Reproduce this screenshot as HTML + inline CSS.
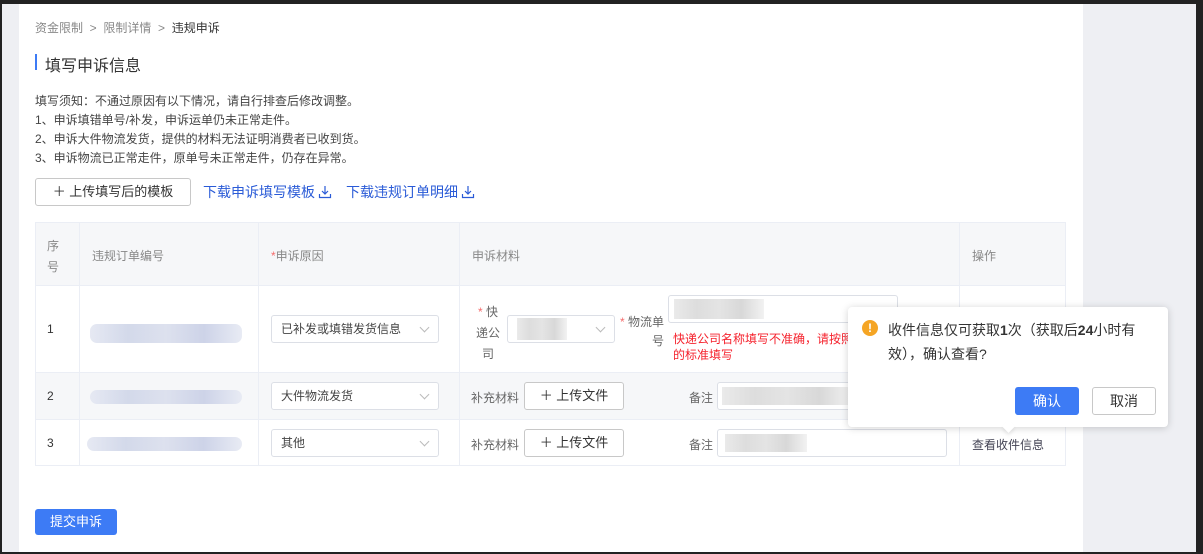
<!DOCTYPE html>
<html><head><meta charset="utf-8"><style>
*{margin:0;padding:0;box-sizing:border-box}
body{width:1203px;height:554px;background:#222;position:relative;overflow:hidden;font-family:"Liberation Sans","Noto Sans CJK SC",sans-serif;color:#333;font-size:12px}
.bg{position:absolute;left:2px;top:4px;width:1194px;height:548px;background:#eeeff3}
.card{position:absolute;left:19px;top:4px;width:1064px;height:548px;background:#fff}
.a{position:absolute;white-space:nowrap}
.gray{color:#888}
.blur{position:absolute;height:14px;border-radius:7px;background:linear-gradient(90deg,#e6e9f3,#d3d9ea,#dde1ee,#cdd3e8,#e8ebf4)}
.blurg{position:absolute;height:18px;background:linear-gradient(90deg,#eaeaea,#ddd,#e4e4e4,#d8d8d8,#f2f2f2)}
.sel{position:absolute;height:28px;border:1px solid #dcdfe6;border-radius:3px;background:#fff;font-size:12px;line-height:26px;padding-left:9px;color:#444}
.sel:after{content:"";position:absolute;right:10px;top:8px;width:6px;height:6px;border-right:1px solid #bbb;border-bottom:1px solid #bbb;transform:rotate(45deg)}
.btn{position:absolute;border:1px solid #c8c8c8;border-radius:3px;background:#fff;text-align:center;color:#333}
.inp{position:absolute;border:1px solid #dcdfe6;border-radius:3px;background:#fff}
.line{position:absolute;background:#ebeef5}
.lk{position:absolute;font-size:14px;color:#2a5bd7;white-space:nowrap}
</style></head><body>
<div class="bg"></div>
<div class="card"></div>
<div class="a gray" style="left:35px;top:19px;font-size:12px">资金限制 &nbsp;&gt;&nbsp; 限制详情 &nbsp;&gt;&nbsp; <span style="color:#333">违规申诉</span></div>
<div class="a" style="left:35px;top:54px;width:2px;height:16px;background:#3d7bf5"></div>
<div class="a" style="left:45px;top:52px;font-size:16px;color:#333">填写申诉信息</div>
<div class="a" style="left:35px;top:92px;line-height:19px;color:#444;font-size:12px">填写须知：不通过原因有以下情况，请自行排查后修改调整。<br>1、申诉填错单号/补发，申诉运单仍未正常走件。<br>2、申诉大件物流发货，提供的材料无法证明消费者已收到货。<br>3、申诉物流已正常走件，原单号未正常走件，仍存在异常。</div>
<div class="btn" style="left:35px;top:178px;width:156px;height:28px;line-height:26px;font-size:13px">＋ 上传填写后的模板</div>
<div class="lk" style="left:203px;top:182px">下载申诉填写模板</div>
<svg class="a" style="left:318px;top:185px" width="14" height="14" viewBox="0 0 14 14" fill="none" stroke="#2a5bd7" stroke-width="1.2"><path d="M7 1v8M4 6l3 3 3-3M1.5 9v3.5h11V9"/></svg>
<div class="lk" style="left:346px;top:182px">下载违规订单明细</div>
<svg class="a" style="left:461px;top:185px" width="14" height="14" viewBox="0 0 14 14" fill="none" stroke="#2a5bd7" stroke-width="1.2"><path d="M7 1v8M4 6l3 3 3-3M1.5 9v3.5h11V9"/></svg>

<div class="a" style="left:35px;top:222px;width:1031px;height:244px;border:1px solid #ebeef5"></div>
<div class="a" style="left:36px;top:223px;width:1029px;height:62px;background:#f6f7f9"></div>
<div class="a" style="left:36px;top:373px;width:1029px;height:46px;background:#f6f7f9"></div>
<div class="line" style="left:35px;top:285px;width:1031px;height:1px"></div>
<div class="line" style="left:35px;top:372px;width:1031px;height:1px"></div>
<div class="line" style="left:35px;top:419px;width:1031px;height:1px"></div>
<div class="line" style="left:79px;top:222px;width:1px;height:244px"></div>
<div class="line" style="left:258px;top:222px;width:1px;height:244px"></div>
<div class="line" style="left:459px;top:222px;width:1px;height:244px"></div>
<div class="line" style="left:959px;top:222px;width:1px;height:244px"></div>
<div class="a gray" style="left:47px;top:236px;line-height:21px">序<br>号</div>
<div class="a gray" style="left:92px;top:247px">违规订单编号</div>
<div class="a gray" style="left:271px;top:247px"><span style="color:#f56c6c">*</span>申诉原因</div>
<div class="a gray" style="left:472px;top:247px">申诉材料</div>
<div class="a gray" style="left:972px;top:247px">操作</div>
<div class="a" style="left:47px;top:322px">1</div>
<div class="a" style="left:47px;top:389px">2</div>
<div class="a" style="left:47px;top:436px">3</div>
<div class="blur" style="left:90px;top:324px;width:152px;height:19px"></div>
<div class="blur" style="left:90px;top:390px;width:152px"></div>
<div class="blur" style="left:87px;top:437px;width:155px"></div>
<div class="sel" style="left:271px;top:315px;width:168px">已补发或填错发货信息</div>
<div class="sel" style="left:271px;top:382px;width:168px">大件物流发货</div>
<div class="sel" style="left:271px;top:429px;width:168px">其他</div>
<div class="a gray" style="left:476px;top:302px;line-height:21px;text-align:center;color:#666"><span style="color:#f56c6c">*</span> 快<br>递公<br>司</div>
<div class="sel" style="left:507px;top:315px;width:108px"></div>
<div class="blurg" style="left:517px;top:318px;width:50px;height:22px"></div>
<div class="a" style="left:618px;top:313px;line-height:19px;text-align:right;color:#666;width:46px"><span style="color:#f56c6c">*</span> 物流单<br>号</div>
<div class="inp" style="left:668px;top:295px;width:230px;height:28px"></div>
<div class="blurg" style="left:674px;top:299px;width:90px;height:20px"></div>
<div class="a" style="left:673px;top:331px;line-height:16px;color:#f5222d">快递公司名称填写不准确，请按照<br>的标准填写</div>
<div class="a" style="left:471px;top:389px;color:#666">补充材料</div>
<div class="btn" style="left:524px;top:382px;width:100px;height:28px;line-height:26px;font-size:13px">＋ 上传文件</div>
<div class="a" style="left:689px;top:389px;color:#666">备注</div>
<div class="inp" style="left:717px;top:382px;width:230px;height:28px"></div>
<div class="blurg" style="left:722px;top:387px;width:130px"></div>
<div class="a" style="left:471px;top:436px;color:#666">补充材料</div>
<div class="btn" style="left:524px;top:429px;width:100px;height:28px;line-height:26px;font-size:13px">＋ 上传文件</div>
<div class="a" style="left:689px;top:436px;color:#666">备注</div>
<div class="inp" style="left:717px;top:429px;width:230px;height:28px"></div>
<div class="blurg" style="left:725px;top:434px;width:82px"></div>
<div class="a" style="left:972px;top:436px;color:#445">查看收件信息</div>

<div class="a" style="left:848px;top:307px;width:320px;height:120px;background:#fff;border-radius:4px;box-shadow:0 1px 8px rgba(0,0,0,.18)"></div>
<div class="a" style="left:1004px;top:422px;width:9px;height:9px;background:#fff;transform:rotate(45deg);box-shadow:2px 2px 3px rgba(0,0,0,.08)"></div>
<div class="a" style="left:862px;top:320px;width:16px;height:16px;border-radius:50%;background:#f5a524;color:#fff;font-size:12px;font-weight:bold;text-align:center;line-height:16px">!</div>
<div class="a" style="left:888px;top:318px;font-size:14px;line-height:24px;color:#333">收件信息仅可获取<b>1</b>次（获取后<b>24</b>小时有<br>效），确认查看?</div>
<div class="a" style="left:1015px;top:387px;width:64px;height:28px;background:#3d7bf5;border-radius:3px;color:#fff;font-size:14px;text-align:center;line-height:28px">确认</div>
<div class="btn" style="left:1092px;top:387px;width:64px;height:28px;line-height:26px;font-size:14px">取消</div>

<div class="a" style="left:35px;top:509px;width:82px;height:26px;background:#3d7bf5;border-radius:3px;color:#fff;font-size:13px;text-align:center;line-height:26px">提交申诉</div>
</body></html>
